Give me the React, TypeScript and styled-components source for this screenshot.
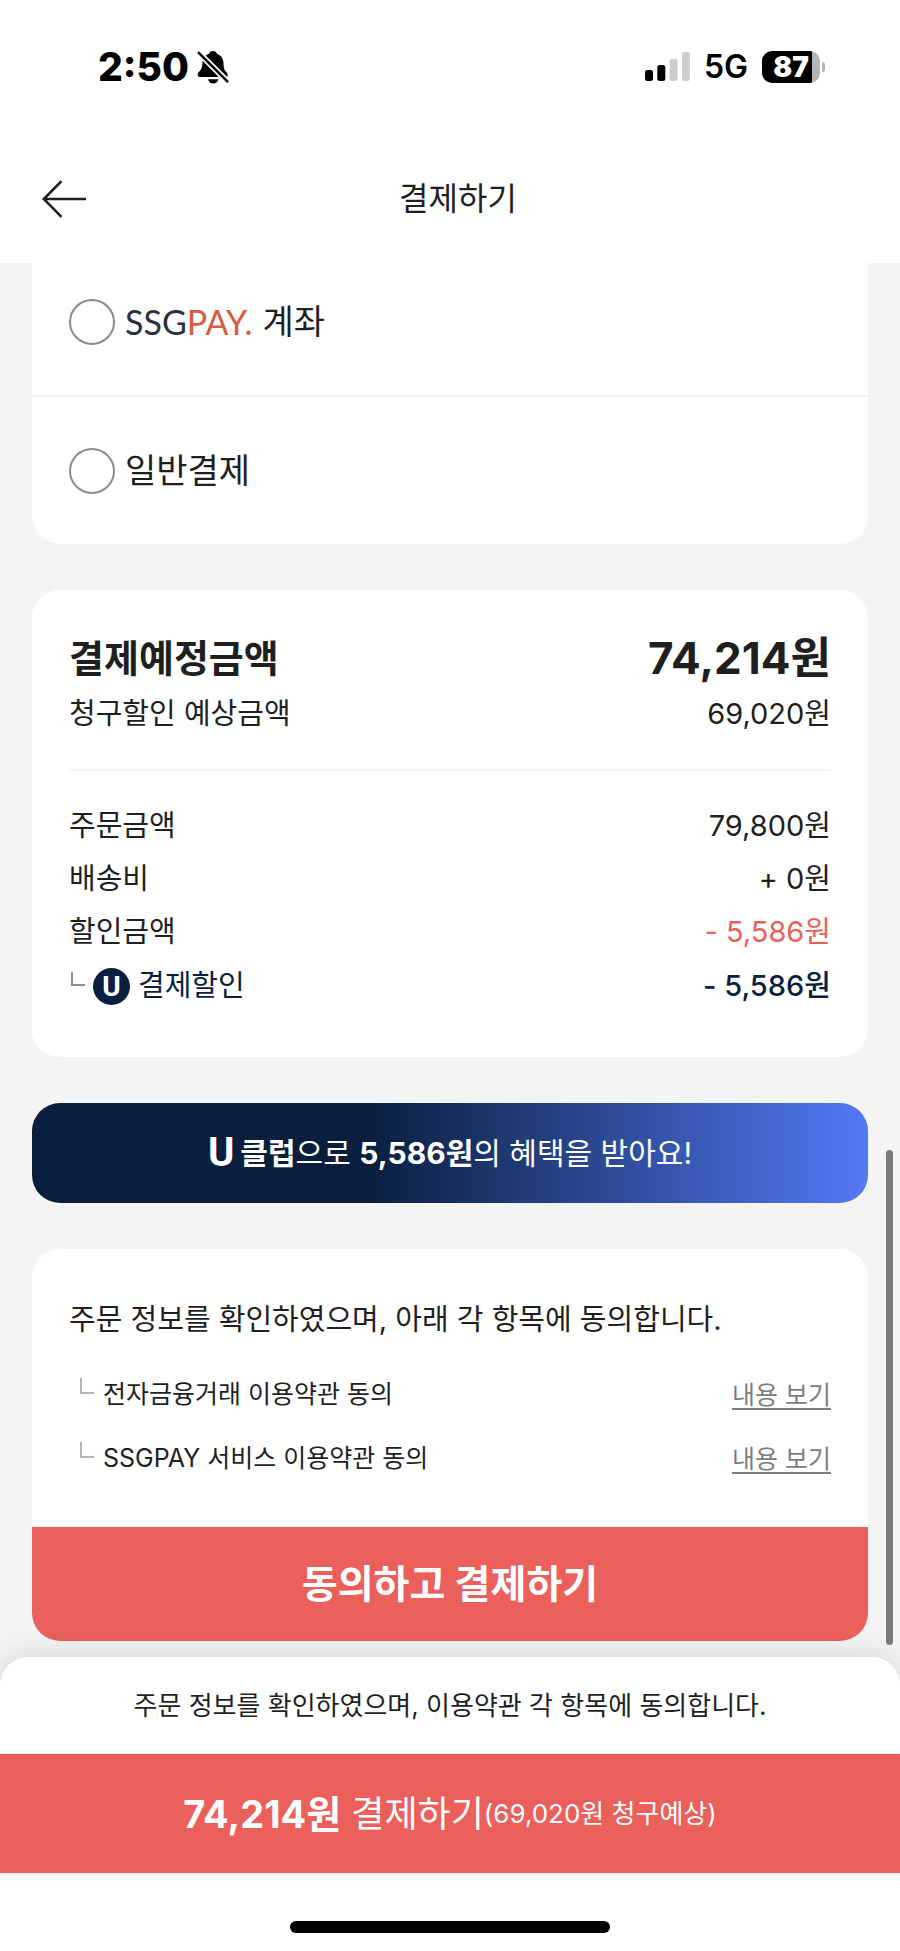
import React from "react";
import styled, { createGlobalStyle } from "styled-components";

const color = {
  ink: "#1f1f1f",
  navy: "#0a1f40",
  coral: "#eb605a",
  grey: "#7d7d7d",
  line: "#f4f4f4",
  canvas: "#f4f4f4",
};

const GlobalStyle = createGlobalStyle`
  *, *::before, *::after { box-sizing: border-box; }
  html, body { margin: 0; padding: 0; }
  body {
    background: #ffffff;
    color: ${color.ink};
    font-family: Inter, "Noto Sans CJK KR", sans-serif;
  }
  button { font-family: inherit; }
`;

const Page = styled.div`
  display: flex;
  flex-direction: column;
  min-height: 100vh;
  background: ${color.canvas};
`;

const StatusBar = styled.div`
  display: flex;
  align-items: center;
  justify-content: space-between;
  height: 134px;
  padding: 0 75px 0 98px;
  background: #ffffff;
  color: #000000;
`;

const StatusGroup = styled.div<{ $gap: number }>`
  display: flex;
  align-items: center;
  gap: ${(p) => p.$gap}px;
`;

const Clock = styled.span`
  font-size: 39px;
  font-weight: 800;
  line-height: 40px;
`;

const Network = styled.span`
  font-size: 32px;
  font-weight: 600;
  line-height: 32px;
`;

const Battery = styled.span`
  display: flex;
  align-items: center;
  gap: 2px;
`;

const BatteryBody = styled.span`
  width: 58px;
  height: 32px;
  border-radius: 10px;
  background: linear-gradient(to right, #000000 50px, #b5b5b5 50px);
  color: #ffffff;
  font-size: 28px;
  font-weight: 900;
  line-height: 32px;
  text-align: center;
`;

const BatteryTip = styled.span`
  width: 3px;
  height: 10px;
  border-radius: 0 4px 4px 0;
  background: #b5b5b5;
`;

const Header = styled.header`
  display: flex;
  align-items: center;
  height: 129px;
  padding: 0 42px;
  background: #ffffff;
`;

const BackButton = styled.button`
  display: flex;
  padding: 0;
  border: 0;
  background: none;
  cursor: pointer;
`;

const Title = styled.h1`
  flex: 1;
  margin: 0;
  padding-right: 28px;
  font-size: 32px;
  font-weight: 400;
  line-height: 40px;
  text-align: center;
`;

const Content = styled.main`
  position: relative;
  display: flex;
  flex: 1;
  flex-direction: column;
  gap: 46px;
  padding: 0 32px 16px;
  overflow: hidden;
`;

const ScrollThumb = styled.div`
  position: absolute;
  right: 7px;
  bottom: 12px;
  width: 7px;
  height: 495px;
  border-radius: 4px;
  background: #7b7b7b;
`;

const Card = styled.section`
  overflow: hidden;
  border-radius: 28px;
  background: #ffffff;
`;

const MethodCard = styled(Card)`
  margin-top: -15px;
  border-radius: 0 0 28px 28px;
`;

const Method = styled.label`
  display: flex;
  align-items: center;
  gap: 10px;
  height: 147px;
  padding: 0 37px;
  font-size: 34px;
  line-height: 40px;
  cursor: pointer;

  & + & {
    height: 149px;
    border-top: 2px solid ${color.line};
  }
`;

const Radio = styled.input`
  width: 46px;
  height: 46px;
  margin: 0;
  border: 2px solid #8b8b8b;
  border-radius: 50%;
  appearance: none;
  background: #ffffff;

  &:checked {
    border: 14px solid ${color.coral};
  }
`;

const PayLogo = styled.span`
  color: #2b3040;
  font-family: Lato, sans-serif;
  font-size: 34px;
  line-height: 40px;

  em {
    color: #dc5a42;
    font-style: normal;
  }
`;

const SummaryCard = styled(Card)`
  padding: 36px 37px 43px;
`;

const Amounts = styled.dl`
  margin: 0;

  & + & {
    margin-top: 31px;
    padding-top: 28px;
    border-top: 2px solid ${color.line};
  }
`;

const AmountRow = styled.div<{ $tone?: string }>`
  display: flex;
  align-items: center;
  justify-content: space-between;
  height: 53px;
  color: ${(p) => p.$tone ?? color.ink};
  font-size: 29px;
  line-height: 40px;
`;

const TotalRow = styled(AmountRow)`
  height: 64px;
  font-size: 38px;
  font-weight: 700;

  dd {
    font-size: 44px;
  }
`;

const ExpectedRow = styled(AmountRow)`
  height: 48px;
`;

const BenefitRow = styled(AmountRow)`
  height: 56px;

  dd {
    font-weight: 500;
  }
`;

const Term = styled.dt`
  display: flex;
  align-items: center;
  color: ${color.ink};
`;

const BenefitTerm = styled(Term)`
  gap: 8px;
  padding-left: 2px;
  color: ${color.navy};
`;

const Value = styled.dd`
  margin: 0;
`;

const Elbow = styled.span<{ $tone: string; $size: number }>`
  flex: none;
  width: 14px;
  height: ${(p) => p.$size}px;
  margin-bottom: ${(p) => p.$size}px;
  border: solid ${(p) => p.$tone};
  border-width: 0 0 2px 2px;
`;

const ClubBadge = styled.span`
  width: 37px;
  height: 37px;
  border-radius: 50%;
  background: ${color.navy};
  color: #ffffff;
  font-family: Roboto, sans-serif;
  font-size: 28px;
  font-weight: 700;
  line-height: 38px;
  text-align: center;
`;

const Banner = styled.p`
  display: flex;
  align-items: center;
  justify-content: center;
  height: 100px;
  margin: 0;
  border-radius: 28px;
  background: linear-gradient(to right, #0a1f3e 40%, #5379f5);
  color: #ffffff;
  font-size: 30px;
  line-height: 40px;
  white-space: pre;
`;

const ClubMark = styled.b`
  margin-right: 6px;
  font-family: Roboto, sans-serif;
  font-size: 40px;
`;

const AgreementBody = styled.div`
  padding: 46px 37px 37px;
`;

const AgreementTitle = styled.h2`
  margin: 0 0 17px;
  font-size: 29px;
  font-weight: 400;
  line-height: 50px;
`;

const TermsList = styled.ul`
  margin: 0;
  padding: 0;
  list-style: none;
`;

const TermsItem = styled.li`
  display: flex;
  align-items: center;
  gap: 9px;
  height: 64px;
  padding-left: 11px;
  font-size: 25px;
  line-height: 30px;
`;

const TermsLink = styled.a`
  margin-left: auto;
  padding-top: 4px;
  border-bottom: 2px solid ${color.grey};
  color: ${color.grey};
  line-height: 26px;
  text-decoration: none;
`;

const PrimaryButton = styled.button<{ $height: number }>`
  display: flex;
  align-items: center;
  justify-content: center;
  width: 100%;
  height: ${(p) => p.$height}px;
  padding: 0;
  border: 0;
  background: ${color.coral};
  color: #ffffff;
  line-height: 48px;
  cursor: pointer;
`;

const AgreeButton = styled(PrimaryButton)`
  font-size: 39px;
  font-weight: 700;
`;

const PayButton = styled(PrimaryButton)`
  font-size: 36px;
  white-space: pre;

  b {
    font-size: 38px;
  }

  small {
    font-size: 26px;
  }
`;

const Sheet = styled.footer`
  position: relative;
  border-radius: 28px 28px 0 0;
  background: #ffffff;
  box-shadow: 0 0 32px rgba(0, 0, 0, 0.14);
`;

const SheetNote = styled.p`
  margin: 0;
  font-size: 26px;
  line-height: 97px;
  text-align: center;
`;

const HomeArea = styled.div`
  display: flex;
  justify-content: center;
  padding: 48px 0 18px;
`;

const HomeIndicator = styled.div`
  width: 320px;
  height: 12px;
  border-radius: 6px;
  background: #000000;
`;

const SilentIcon = () => (
  <svg width="32" height="34" viewBox="0 0 32 34" aria-label="무음">
    <path
      d="M16 1c2 0 3.600 1.200 4 2.800 4.200 1.500 6.400 5 6.500 9.400.1 4.600.8 6.500 2.600 8.600 1.200 1.400 1.700 2.300 1.600 3.600-.1 1.200-.9 1.600-2.200 1.600H3.200c-1.600 0-2.500-.8-2.500-2.100 0-1.700 1-2.600 2.300-4.200 1.700-2 2.300-4 2.400-7.500.1-4.400 2.400-7.900 6.600-9.400C12.400 2.200 14 1 16 1Z"
      fill="#000"
    />
    <path d="M11 29.300h10.400c-.6 2.700-2.500 4.300-5.200 4.300s-4.600-1.600-5.200-4.300Z" fill="#000" />
    <path d="M1.500 2.500 31 32" stroke="#fff" strokeWidth="6" />
    <path d="M1.800 2.800 30.300 31.300" stroke="#000" strokeWidth="2.600" strokeLinecap="round" />
  </svg>
);

const SignalIcon = () => (
  <svg width="45" height="30" viewBox="0 0 45 30" aria-label="신호 세기">
    <rect x="0" y="18" width="8" height="11" rx="2.500" fill="#000" />
    <rect x="12.300" y="13" width="8" height="16" rx="2.500" fill="#000" />
    <rect x="24.600" y="7" width="8" height="22" rx="2.500" fill="#cdcdcd" />
    <rect x="36.900" y="0" width="8" height="29" rx="2.500" fill="#cdcdcd" />
  </svg>
);

const BackIcon = () => (
  <svg width="44" height="38" viewBox="0 0 44 38" fill="none" aria-hidden="true">
    <path d="M19.500 1.200 1.800 19l17.700 17.800M1.800 19H44" stroke={color.ink} strokeWidth="2.600" />
  </svg>
);

export default function App() {
  return (
    <>
      <GlobalStyle />
      <Page>
        <StatusBar>
          <StatusGroup $gap={8}>
            <Clock>2:50</Clock>
            <SilentIcon />
          </StatusGroup>
          <StatusGroup $gap={14}>
            <SignalIcon />
            <Network>5G</Network>
            <Battery>
              <BatteryBody>87</BatteryBody>
              <BatteryTip />
            </Battery>
          </StatusGroup>
        </StatusBar>

        <Header>
          <BackButton type="button" aria-label="뒤로">
            <BackIcon />
          </BackButton>
          <Title>결제하기</Title>
        </Header>

        <Content>
          <MethodCard>
            <Method>
              <Radio type="radio" name="method" value="ssgpay" />
              <PayLogo>
                SSG<em>PAY.</em>
              </PayLogo>
              <span>계좌</span>
            </Method>
            <Method>
              <Radio type="radio" name="method" value="general" />
              <span>일반결제</span>
            </Method>
          </MethodCard>

          <SummaryCard>
            <Amounts>
              <TotalRow>
                <Term>결제예정금액</Term>
                <Value>74,214원</Value>
              </TotalRow>
              <ExpectedRow>
                <Term>청구할인 예상금액</Term>
                <Value>69,020원</Value>
              </ExpectedRow>
            </Amounts>
            <Amounts>
              <AmountRow>
                <Term>주문금액</Term>
                <Value>79,800원</Value>
              </AmountRow>
              <AmountRow>
                <Term>배송비</Term>
                <Value>+ 0원</Value>
              </AmountRow>
              <AmountRow $tone={color.coral}>
                <Term>할인금액</Term>
                <Value>- 5,586원</Value>
              </AmountRow>
              <BenefitRow $tone={color.navy}>
                <BenefitTerm>
                  <Elbow $tone="#8f8f8f" $size={14} />
                  <ClubBadge>U</ClubBadge>
                  결제할인
                </BenefitTerm>
                <Value>- 5,586원</Value>
              </BenefitRow>
            </Amounts>
          </SummaryCard>

          <Banner>
            <ClubMark>U</ClubMark>
            <b>클럽</b>으로 <b>5,586원</b>의 혜택을 받아요!
          </Banner>

          <Card>
            <AgreementBody>
              <AgreementTitle>주문 정보를 확인하였으며, 아래 각 항목에 동의합니다.</AgreementTitle>
              <TermsList>
                <TermsItem>
                  <Elbow $tone="#b5b5b5" $size={16} />
                  전자금융거래 이용약관 동의
                  <TermsLink href="#finance-terms">내용 보기</TermsLink>
                </TermsItem>
                <TermsItem>
                  <Elbow $tone="#b5b5b5" $size={16} />
                  SSGPAY 서비스 이용약관 동의
                  <TermsLink href="#service-terms">내용 보기</TermsLink>
                </TermsItem>
              </TermsList>
            </AgreementBody>
            <AgreeButton type="button" $height={114}>
              동의하고 결제하기
            </AgreeButton>
          </Card>
          <ScrollThumb />
        </Content>

        <Sheet>
          <SheetNote>주문 정보를 확인하였으며, 이용약관 각 항목에 동의합니다.</SheetNote>
          <PayButton type="button" $height={119}>
            <b>74,214원</b> 결제하기<small>(69,020원 청구예상)</small>
          </PayButton>
          <HomeArea>
            <HomeIndicator />
          </HomeArea>
        </Sheet>
      </Page>
    </>
  );
}
